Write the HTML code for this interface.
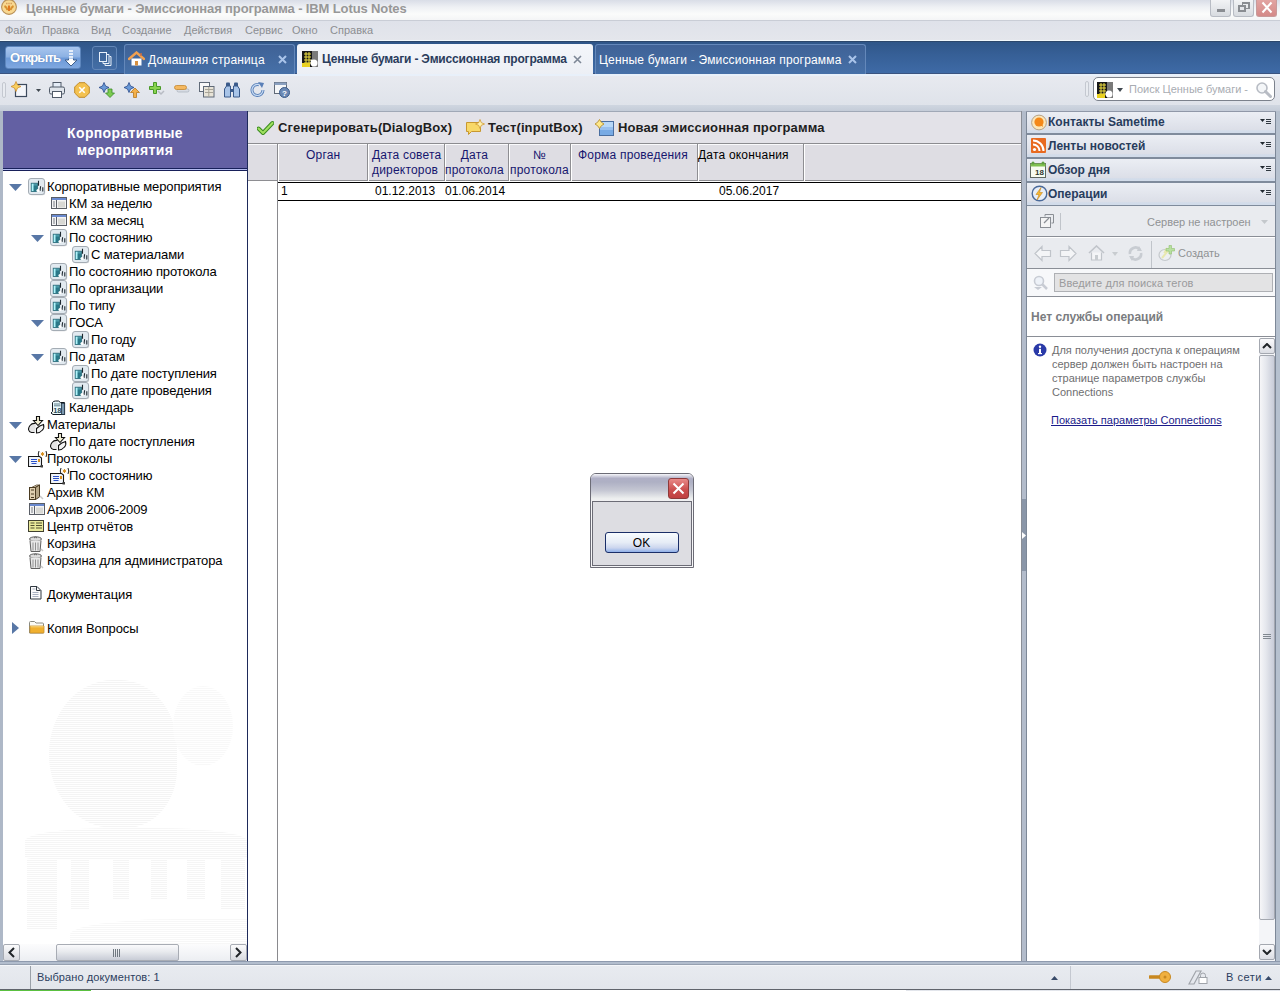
<!DOCTYPE html>
<html><head><meta charset="utf-8">
<style>
*{box-sizing:border-box;margin:0;padding:0}
html,body{width:1280px;height:991px;overflow:hidden;background:#e6e9ef;font-family:"Liberation Sans",sans-serif;font-size:12px;color:#000}
.a{position:absolute}
.nw{white-space:nowrap}
.hd{font-size:12px;line-height:15px;color:#16166e;letter-spacing:0.2px}
.dt{font-size:12px;line-height:15px;color:#000}
.tt{font-size:13px;line-height:17px;color:#000;letter-spacing:-0.12px}
svg{display:block}
/* title */
#title{left:0;top:0;width:1280px;height:20px;background:linear-gradient(#d9dde7 0%,#eef0f4 35%,#fbfcfb 70%,#f4f5f6 100%)}
#menu{left:0;top:20px;width:1280px;height:21px;background:linear-gradient(#dfe2ea,#e4e6ec);border-top:1px solid #c9cdd6;border-bottom:1px solid #f2f8fc}
#menu span{position:absolute;top:3px;font-size:11px;color:#8c8e92}
#tabs{left:0;top:41px;width:1280px;height:33px;background:linear-gradient(#2f5587 0%,#365f96 40%,#3f6ba7 100%)}
#tb{left:0;top:74px;width:1280px;height:31px;background:linear-gradient(#e8eaf0,#dfe3ea)}
#band{left:0;top:105px;width:1280px;height:6px;background:linear-gradient(#cfd6e0,#c4ccd8)}
#leftp{left:3px;top:111px;width:245px;height:850px;background:#fff;border-right:1px solid #1e2a5a}
#lhead{left:0;top:0;width:244px;height:60px;background:linear-gradient(#6360a3 0 57px,#18205a 57px 58px,#b4bcf0 58px 59px,#18205a 59px 60px);color:#fff;font-weight:bold;font-size:14px;text-align:center;line-height:17px;padding-top:14px;letter-spacing:0.35px}
#main{left:248px;top:111px;width:774px;height:850px;background:#fff;border-right:1px solid #8a8e96}
#split{left:1022px;top:111px;width:4px;height:850px;background:#b3bccb}
#side{left:1026px;top:111px;width:250px;height:850px;background:#fff}
#lborder{left:0;top:111px;width:3px;height:854px;background:#aeb8c7}
#rborder{left:1276px;top:111px;width:4px;height:850px;background:#b6c1cf}
#sbot{left:0;top:961px;width:1280px;height:4px;background:linear-gradient(#8e9aae 0 1px,#b2bdcd 1px 3px,#96a0b0 3px 4px)}
#status{left:0;top:965px;width:1280px;height:26px;background:linear-gradient(#e8ebf0,#e2e5eb)}
</style></head><body>
<div id="title" class="a">
 <svg class="a" style="left:1px;top:0" width="17" height="16" viewBox="0 0 17 16"><circle cx="8" cy="7" r="7.4" fill="#f8d890" stroke="#b89058" stroke-width="1.1"/><path d="M3.5 6q2 1 3 4M12.5 6q-2 1-3 4" stroke="#d89030" stroke-width="2" fill="none"/><path d="M8 5.5v5.5" stroke="#e07820" stroke-width="2.2"/><path d="M5 3.5h1.5M9.5 3.5h1.5M7.3 3.5h1.4" stroke="#d8a060" stroke-width="1.3"/></svg>
 <div class="a nw" style="left:26px;top:1px;font-size:13px;font-weight:bold;color:#979797;letter-spacing:-0.12px">Ценные бумаги - Эмиссионная программа - IBM Lotus Notes</div>
 <div class="a" style="left:1210px;top:0;width:21px;height:17px;border:1px solid #b8bcc4;border-top:none;border-radius:0 0 3px 3px;background:linear-gradient(#f2f3f5,#d8dbe0)"><div class="a" style="left:6px;top:9px;width:8px;height:3px;background:#8a8d92"></div></div>
 <div class="a" style="left:1233px;top:0;width:21px;height:17px;border:1px solid #b8bcc4;border-top:none;border-radius:0 0 3px 3px;background:linear-gradient(#f2f3f5,#d8dbe0)"><div class="a" style="left:8px;top:2px;width:8px;height:7px;border:2px solid #8a8d92;border-left-width:1px;border-bottom-width:1px"></div><div class="a" style="left:4px;top:5px;width:8px;height:7px;border:2px solid #8a8d92;background:#e4e6ea"></div></div>
 <div class="a" style="left:1256px;top:0;width:21px;height:17px;border:1px solid #c89a9a;border-top:none;border-radius:0 0 3px 3px;background:linear-gradient(#e2a4a2,#d48a88)"><svg class="a" style="left:4px;top:1px" width="12" height="13"><path d="M1.5 1.5 L10.5 11.5 M10.5 1.5 L1.5 11.5" stroke="#fff" stroke-width="2"/></svg></div>
</div>
<div id="menu" class="a">
 <span style="left:5px">Файл</span><span style="left:42px">Правка</span><span style="left:91px">Вид</span><span style="left:122px">Создание</span><span style="left:184px">Действия</span><span style="left:245px">Сервис</span><span style="left:292px">Окно</span><span style="left:330px">Справка</span>
</div>
<div id="tabs" class="a">
 <div class="a" style="left:0;top:0;width:1280px;height:1px;background:#2c476b"></div>
 <div class="a" style="left:0;top:32px;width:1280px;height:1px;background:#3a5480"></div>
 <div class="a" style="left:5px;top:5px;width:76px;height:23px;border-radius:3px;border:1px solid #5d86bd;background:linear-gradient(#a9c6ee 0%,#8db2e4 45%,#6d9ad8 55%,#7fa8e0 100%)">
  <div class="a nw" style="left:4px;top:3px;font-size:13px;font-weight:bold;color:#fff;letter-spacing:-0.9px;text-shadow:0 0 1px #5a7fb0">Открыть</div>
  <svg class="a" style="left:58px;top:3px" width="14" height="17" viewBox="0 0 14 17"><path d="M5 1h4M5 4h4M5 7h4" stroke="#fff" stroke-width="1.6"/><path d="M4.5 8.5 V10 H1 L7 16 L13 10 H9.5 V8.5" fill="#fff" stroke="#3d5d8a" stroke-width="1"/></svg>
 </div>
 <div class="a" style="left:92px;top:5px;width:25px;height:24px;border-radius:3px;border:1px solid #6387b8;background:rgba(255,255,255,0.04)">
  <svg class="a" style="left:5px;top:4px" width="14" height="15" viewBox="0 0 14 15"><rect x="1.5" y="1.5" width="7" height="9" fill="none" stroke="#e8f0fa" stroke-width="1"/><path d="M9 3.5h2v9h-6v-1.5" fill="none" stroke="#e8f0fa"/><path d="M11.5 5.5h1.5v9h-6v-1.5" fill="none" stroke="#e8f0fa"/></svg>
 </div>
 <div class="a" style="left:124px;top:3px;width:171px;height:30px;border:1px solid #6488ba;border-bottom:none;border-radius:3px 3px 0 0;background:linear-gradient(#3f6296,#4670a8)">
  <svg class="a" style="left:3px;top:6px" width="17" height="16" viewBox="0 0 17 16"><path d="M1 8 L8.5 1.5 L16 8" fill="none" stroke="#f0a050" stroke-width="2.4" stroke-linecap="round"/><rect x="3.5" y="7.5" width="10" height="7" fill="#fff"/><rect x="7" y="10" width="3" height="4.5" fill="#d89040"/><path d="M13 2v3" stroke="#d07040" stroke-width="1.5"/></svg>
  <div class="a nw" style="left:23px;top:8px;font-size:12px;color:#fff;letter-spacing:0.15px">Домашняя страница</div>
  <svg class="a" style="left:153px;top:10px" width="9" height="9" viewBox="0 0 9 9"><path d="M1 1L8 8M8 1L1 8" stroke="#a9c4ea" stroke-width="2"/></svg>
 </div>
 <div class="a" style="left:297px;top:3px;width:296px;height:31px;border-radius:3px 3px 0 0;background:linear-gradient(#f4f6fa,#eceff5)">
  <svg class="a" style="left:5px;top:7px" width="16" height="16" viewBox="0 0 16 16"><rect x="0" y="0" width="16" height="16" fill="#7a7a7a"/><rect x="0" y="0" width="10" height="16" fill="#181818"/><path d="M2 3h7M2 6h7M2 9h7M2 12h7M4 1v14M7 1v14" stroke="#f0e040" stroke-width="1"/><rect x="0" y="12" width="8" height="4" fill="#e8d020"/><circle cx="12" cy="12" r="3.5" fill="#fff"/><path d="M9 9l3 2" stroke="#fff" stroke-width="2"/></svg>
  <div class="a nw" style="left:25px;top:8px;font-size:12px;font-weight:bold;color:#2a3c5c;letter-spacing:-0.2px">Ценные бумаги - Эмиссионная программа</div>
  <svg class="a" style="left:276px;top:11px" width="9" height="9" viewBox="0 0 9 9"><path d="M1 1L8 8M8 1L1 8" stroke="#7d8796" stroke-width="1.6"/></svg>
 </div>
 <div class="a" style="left:595px;top:3px;width:271px;height:30px;border:1px solid #6488ba;border-bottom:none;border-radius:3px 3px 0 0;background:linear-gradient(#3f6296,#4670a8)">
  <div class="a nw" style="left:3px;top:8px;font-size:12px;color:#fff;letter-spacing:0.18px">Ценные бумаги - Эмиссионная программа</div>
  <svg class="a" style="left:252px;top:10px" width="9" height="9" viewBox="0 0 9 9"><path d="M1 1L8 8M8 1L1 8" stroke="#a9c4ea" stroke-width="2"/></svg>
 </div>
</div>
<div id="tb" class="a">
 <div class="a" style="left:0;top:0;width:1280px;height:2px;background:#e8f0fa"></div>
 <div class="a" style="left:2px;top:8px;width:4px;height:16px;border:1px solid #c4c8d0;border-radius:2px;background:#e8ebf0"></div>
 <svg class="a" style="left:11px;top:7px" width="30" height="17" viewBox="0 0 30 17"><rect x="4.5" y="3.5" width="11" height="12" fill="#f4f6fa" stroke="#3c4a5e" stroke-width="1.2"/><path d="M5 0.5 L6.5 4 L10 5.5 L6.5 7 L5 10.5 L3.5 7 L0 5.5 L3.5 4Z" fill="#f8d060" stroke="#d09030" stroke-width="0.8"/><path d="M25 8h5l-2.5 3z" fill="#404850"/></svg>
 <svg class="a" style="left:49px;top:8px" width="16" height="16" viewBox="0 0 16 16"><rect x="4" y="0.5" width="8" height="5" fill="#e4ecf6" stroke="#505a68"/><rect x="0.5" y="5" width="15" height="7" rx="1.5" fill="#dfe4ea" stroke="#505a68"/><rect x="3.5" y="9.5" width="9" height="6" fill="#fff" stroke="#505a68"/></svg>
 <svg class="a" style="left:74px;top:8px" width="16" height="16" viewBox="0 0 16 16"><path d="M5 0.7h6l4.3 4.3v6l-4.3 4.3h-6l-4.3-4.3v-6z" fill="#f4c250" stroke="#c08a28"/><path d="M5.3 5.3l5.4 5.4M10.7 5.3l-5.4 5.4" stroke="#fff" stroke-width="1.6"/></svg>
 <svg class="a" style="left:99px;top:8px" width="16" height="16" viewBox="0 0 16 16"><path d="M5 0.5 L6.5 4 L10 5.5 L6.5 7 L5 10.5 L3.5 7 L0 5.5 L3.5 4Z" fill="#6a9ad8" stroke="#2a4a8a" stroke-width="0.8"/><path d="M9 7h4v4h2.5l-4.5 4.5l-4.5-4.5h2.5z" fill="#7ccb50" stroke="#3a8a28" stroke-width="0.8"/></svg>
 <svg class="a" style="left:124px;top:8px" width="16" height="16" viewBox="0 0 16 16"><path d="M5 0.5 L6.5 4 L10 5.5 L6.5 7 L5 10.5 L3.5 7 L0 5.5 L3.5 4Z" fill="#6a9ad8" stroke="#2a4a8a" stroke-width="0.8"/><path d="M9.5 15.5v-5h-3l4.5-4.5l4.5 4.5h-3v5z" fill="#f4b048" stroke="#b87820" stroke-width="0.8"/></svg>
 <svg class="a" style="left:149px;top:8px" width="16" height="16" viewBox="0 0 16 16"><path d="M9 9l3 3l3-3" fill="none" stroke="#b8bcc4" stroke-width="1.5"/><path d="M4.5 0.5h3v4h4v3h-4v4h-3v-4h-4v-3h4z" fill="#8ad450" stroke="#4a9a28" stroke-width="1"/></svg>
 <svg class="a" style="left:174px;top:8px" width="16" height="16" viewBox="0 0 16 16"><rect x="3" y="7" width="12" height="3" rx="1.5" fill="#d8dce4" stroke="#a0a8b4" stroke-width="0.6"/><rect x="0.5" y="3.5" width="12" height="4" rx="2" fill="#f4b860" stroke="#c48830" stroke-width="0.8"/></svg>
 <svg class="a" style="left:199px;top:8px" width="16" height="16" viewBox="0 0 16 16"><rect x="0.5" y="0.5" width="10" height="9" fill="#f8f8f8" stroke="#606a78"/><rect x="4.5" y="4.5" width="10.5" height="10.5" fill="#e8e4d8" stroke="#606a78"/><path d="M6 7.5h8M6 10.5h8M9.8 5v10" stroke="#a8a498"/></svg>
 <svg class="a" style="left:224px;top:8px" width="16" height="16" viewBox="0 0 16 16"><rect x="2" y="0.5" width="4" height="5" rx="1" fill="#3a5a8a"/><rect x="10" y="0.5" width="4" height="5" rx="1" fill="#3a5a8a"/><path d="M0.5 15V7l2-3h4v11zM15.5 15V7l-2-3h-4v11z" fill="#a8c4e8" stroke="#3a5a8a"/><rect x="6" y="7" width="4" height="3" fill="#3a5a8a"/></svg>
 <svg class="a" style="left:250px;top:8px" width="16" height="16" viewBox="0 0 16 16"><path d="M13 8A5.5 5.5 0 1 1 9 2.7" fill="none" stroke="#5a80b8" stroke-width="3"/><path d="M13 8A5.5 5.5 0 1 1 9 2.7" fill="none" stroke="#c8dcf4" stroke-width="1.2"/><path d="M8 0l6 1l-2 5z" fill="#5a80b8"/></svg>
 <svg class="a" style="left:274px;top:8px" width="16" height="16" viewBox="0 0 16 16"><rect x="0.5" y="0.5" width="12" height="11" fill="#f4f6f8" stroke="#606a78"/><rect x="0.5" y="0.5" width="12" height="2.5" fill="#8aa0c0"/><circle cx="10.5" cy="10.5" r="5" fill="#6a88b4" stroke="#3a5a88"/><text x="10.5" y="13.8" font-size="8" font-weight="bold" fill="#fff" text-anchor="middle" font-family="Liberation Sans">?</text></svg>
 <!-- search -->
 <div class="a" style="left:1085px;top:7px;width:4px;height:16px;border:1px solid #c4c8d0;border-radius:2px;background:#e8ebf0"></div>
 <div class="a" style="left:1093px;top:3px;width:182px;height:24px;border:1px solid #7c828c;border-radius:5px;background:#fff">
  <svg class="a" style="left:3px;top:4px" width="16" height="16" viewBox="0 0 16 16"><rect x="0" y="0" width="16" height="16" fill="#7a7a7a"/><rect x="0" y="0" width="10" height="16" fill="#181818"/><path d="M2 3h7M2 6h7M2 9h7M2 12h7M4 1v14M7 1v14" stroke="#f0e040" stroke-width="1"/><rect x="0" y="12" width="8" height="4" fill="#e8d020"/><circle cx="12" cy="12" r="3.5" fill="#fff"/></svg>
  <svg class="a" style="left:23px;top:10px" width="6" height="4"><path d="M0 0h6l-3 4z" fill="#404850"/></svg>
  <div class="a nw" style="left:35px;top:5px;font-size:11px;color:#a8acb2">Поиск Ценные бумаги -</div>
  <svg class="a" style="left:161px;top:3px" width="17" height="17" viewBox="0 0 17 17"><circle cx="7" cy="7" r="5" fill="#f4f6f8" stroke="#b8bcc4" stroke-width="1.6"/><path d="M10.5 10.5l5 5" stroke="#b8bcc4" stroke-width="3" stroke-linecap="round"/></svg>
 </div>
</div>
<div id="band" class="a"></div>
<div id="lborder" class="a"></div>
<div id="rborder" class="a"></div>
<div id="leftp" class="a"><div id="lhead" class="a">Корпоративные<br>мероприятия</div>
<!--TREE-->
<svg class="a" style="left:6px;top:73px" width="13" height="7" viewBox="0 0 13 7"><path d="M0 0h13l-6.5 7z" fill="#5877a6"/></svg>
<svg class="a" style="left:25px;top:67px" width="18" height="18" viewBox="0 0 18 18"><rect x="1.2" y="1.2" width="16" height="16" rx="2.5" fill="#cdd0d4"/><rect x="0.5" y="0.5" width="16" height="16" rx="2.5" fill="#e2eaf0" stroke="#a4acb4"/><rect x="3.2" y="5.2" width="6.3" height="8.3" fill="#4a9aa8" stroke="#2a6a78" stroke-width="0.8"/><rect x="3.8" y="5.8" width="1.7" height="7.2" fill="#b0f4fa"/><rect x="5.8" y="7.6" width="3.4" height="5.8" fill="#2a7888"/><path d="M10.5 2.8v5M12.6 8.2l-0.6 4.8M14.8 9.2v4.3" stroke="#1e2830" stroke-width="1.1"/><circle cx="10" cy="12.5" r="1.6" fill="#fff"/></svg>
<div class="a nw tt" style="left:44px;top:67px">Корпоративные мероприятия</div>
<svg class="a" style="left:48px;top:86px" width="16" height="12" viewBox="0 0 16 12"><rect x="0.5" y="0.5" width="15" height="11" fill="#f4f4f4" stroke="#5a5e66"/><rect x="1" y="1" width="14" height="2" fill="#6a8ad0"/><path d="M5.5 3v8" stroke="#5a5e66"/><path d="M2 5h2M2 7h2M2 9h2" stroke="#7a7e86"/><rect x="7" y="4.5" width="7" height="6" fill="#d8d8d4"/></svg>
<div class="a nw tt" style="left:66px;top:84px">КМ за неделю</div>
<svg class="a" style="left:48px;top:103px" width="16" height="12" viewBox="0 0 16 12"><rect x="0.5" y="0.5" width="15" height="11" fill="#f4f4f4" stroke="#5a5e66"/><rect x="1" y="1" width="14" height="2" fill="#6a8ad0"/><path d="M5.5 3v8" stroke="#5a5e66"/><path d="M2 5h2M2 7h2M2 9h2" stroke="#7a7e86"/><rect x="7" y="4.5" width="7" height="6" fill="#d8d8d4"/></svg>
<div class="a nw tt" style="left:66px;top:101px">КМ за месяц</div>
<svg class="a" style="left:28px;top:124px" width="13" height="7" viewBox="0 0 13 7"><path d="M0 0h13l-6.5 7z" fill="#5877a6"/></svg>
<svg class="a" style="left:47px;top:118px" width="18" height="18" viewBox="0 0 18 18"><rect x="1.2" y="1.2" width="16" height="16" rx="2.5" fill="#cdd0d4"/><rect x="0.5" y="0.5" width="16" height="16" rx="2.5" fill="#e2eaf0" stroke="#a4acb4"/><rect x="3.2" y="5.2" width="6.3" height="8.3" fill="#4a9aa8" stroke="#2a6a78" stroke-width="0.8"/><rect x="3.8" y="5.8" width="1.7" height="7.2" fill="#b0f4fa"/><rect x="5.8" y="7.6" width="3.4" height="5.8" fill="#2a7888"/><path d="M10.5 2.8v5M12.6 8.2l-0.6 4.8M14.8 9.2v4.3" stroke="#1e2830" stroke-width="1.1"/><circle cx="10" cy="12.5" r="1.6" fill="#fff"/></svg>
<div class="a nw tt" style="left:66px;top:118px">По состоянию</div>
<svg class="a" style="left:69px;top:135px" width="18" height="18" viewBox="0 0 18 18"><rect x="1.2" y="1.2" width="16" height="16" rx="2.5" fill="#cdd0d4"/><rect x="0.5" y="0.5" width="16" height="16" rx="2.5" fill="#e2eaf0" stroke="#a4acb4"/><rect x="3.2" y="5.2" width="6.3" height="8.3" fill="#4a9aa8" stroke="#2a6a78" stroke-width="0.8"/><rect x="3.8" y="5.8" width="1.7" height="7.2" fill="#b0f4fa"/><rect x="5.8" y="7.6" width="3.4" height="5.8" fill="#2a7888"/><path d="M10.5 2.8v5M12.6 8.2l-0.6 4.8M14.8 9.2v4.3" stroke="#1e2830" stroke-width="1.1"/><circle cx="10" cy="12.5" r="1.6" fill="#fff"/></svg>
<div class="a nw tt" style="left:88px;top:135px">С материалами</div>
<svg class="a" style="left:47px;top:152px" width="18" height="18" viewBox="0 0 18 18"><rect x="1.2" y="1.2" width="16" height="16" rx="2.5" fill="#cdd0d4"/><rect x="0.5" y="0.5" width="16" height="16" rx="2.5" fill="#e2eaf0" stroke="#a4acb4"/><rect x="3.2" y="5.2" width="6.3" height="8.3" fill="#4a9aa8" stroke="#2a6a78" stroke-width="0.8"/><rect x="3.8" y="5.8" width="1.7" height="7.2" fill="#b0f4fa"/><rect x="5.8" y="7.6" width="3.4" height="5.8" fill="#2a7888"/><path d="M10.5 2.8v5M12.6 8.2l-0.6 4.8M14.8 9.2v4.3" stroke="#1e2830" stroke-width="1.1"/><circle cx="10" cy="12.5" r="1.6" fill="#fff"/></svg>
<div class="a nw tt" style="left:66px;top:152px">По состоянию протокола</div>
<svg class="a" style="left:47px;top:169px" width="18" height="18" viewBox="0 0 18 18"><rect x="1.2" y="1.2" width="16" height="16" rx="2.5" fill="#cdd0d4"/><rect x="0.5" y="0.5" width="16" height="16" rx="2.5" fill="#e2eaf0" stroke="#a4acb4"/><rect x="3.2" y="5.2" width="6.3" height="8.3" fill="#4a9aa8" stroke="#2a6a78" stroke-width="0.8"/><rect x="3.8" y="5.8" width="1.7" height="7.2" fill="#b0f4fa"/><rect x="5.8" y="7.6" width="3.4" height="5.8" fill="#2a7888"/><path d="M10.5 2.8v5M12.6 8.2l-0.6 4.8M14.8 9.2v4.3" stroke="#1e2830" stroke-width="1.1"/><circle cx="10" cy="12.5" r="1.6" fill="#fff"/></svg>
<div class="a nw tt" style="left:66px;top:169px">По организации</div>
<svg class="a" style="left:47px;top:186px" width="18" height="18" viewBox="0 0 18 18"><rect x="1.2" y="1.2" width="16" height="16" rx="2.5" fill="#cdd0d4"/><rect x="0.5" y="0.5" width="16" height="16" rx="2.5" fill="#e2eaf0" stroke="#a4acb4"/><rect x="3.2" y="5.2" width="6.3" height="8.3" fill="#4a9aa8" stroke="#2a6a78" stroke-width="0.8"/><rect x="3.8" y="5.8" width="1.7" height="7.2" fill="#b0f4fa"/><rect x="5.8" y="7.6" width="3.4" height="5.8" fill="#2a7888"/><path d="M10.5 2.8v5M12.6 8.2l-0.6 4.8M14.8 9.2v4.3" stroke="#1e2830" stroke-width="1.1"/><circle cx="10" cy="12.5" r="1.6" fill="#fff"/></svg>
<div class="a nw tt" style="left:66px;top:186px">По типу</div>
<svg class="a" style="left:28px;top:209px" width="13" height="7" viewBox="0 0 13 7"><path d="M0 0h13l-6.5 7z" fill="#5877a6"/></svg>
<svg class="a" style="left:47px;top:203px" width="18" height="18" viewBox="0 0 18 18"><rect x="1.2" y="1.2" width="16" height="16" rx="2.5" fill="#cdd0d4"/><rect x="0.5" y="0.5" width="16" height="16" rx="2.5" fill="#e2eaf0" stroke="#a4acb4"/><rect x="3.2" y="5.2" width="6.3" height="8.3" fill="#4a9aa8" stroke="#2a6a78" stroke-width="0.8"/><rect x="3.8" y="5.8" width="1.7" height="7.2" fill="#b0f4fa"/><rect x="5.8" y="7.6" width="3.4" height="5.8" fill="#2a7888"/><path d="M10.5 2.8v5M12.6 8.2l-0.6 4.8M14.8 9.2v4.3" stroke="#1e2830" stroke-width="1.1"/><circle cx="10" cy="12.5" r="1.6" fill="#fff"/></svg>
<div class="a nw tt" style="left:66px;top:203px">ГОСА</div>
<svg class="a" style="left:69px;top:220px" width="18" height="18" viewBox="0 0 18 18"><rect x="1.2" y="1.2" width="16" height="16" rx="2.5" fill="#cdd0d4"/><rect x="0.5" y="0.5" width="16" height="16" rx="2.5" fill="#e2eaf0" stroke="#a4acb4"/><rect x="3.2" y="5.2" width="6.3" height="8.3" fill="#4a9aa8" stroke="#2a6a78" stroke-width="0.8"/><rect x="3.8" y="5.8" width="1.7" height="7.2" fill="#b0f4fa"/><rect x="5.8" y="7.6" width="3.4" height="5.8" fill="#2a7888"/><path d="M10.5 2.8v5M12.6 8.2l-0.6 4.8M14.8 9.2v4.3" stroke="#1e2830" stroke-width="1.1"/><circle cx="10" cy="12.5" r="1.6" fill="#fff"/></svg>
<div class="a nw tt" style="left:88px;top:220px">По году</div>
<svg class="a" style="left:28px;top:243px" width="13" height="7" viewBox="0 0 13 7"><path d="M0 0h13l-6.5 7z" fill="#5877a6"/></svg>
<svg class="a" style="left:47px;top:237px" width="18" height="18" viewBox="0 0 18 18"><rect x="1.2" y="1.2" width="16" height="16" rx="2.5" fill="#cdd0d4"/><rect x="0.5" y="0.5" width="16" height="16" rx="2.5" fill="#e2eaf0" stroke="#a4acb4"/><rect x="3.2" y="5.2" width="6.3" height="8.3" fill="#4a9aa8" stroke="#2a6a78" stroke-width="0.8"/><rect x="3.8" y="5.8" width="1.7" height="7.2" fill="#b0f4fa"/><rect x="5.8" y="7.6" width="3.4" height="5.8" fill="#2a7888"/><path d="M10.5 2.8v5M12.6 8.2l-0.6 4.8M14.8 9.2v4.3" stroke="#1e2830" stroke-width="1.1"/><circle cx="10" cy="12.5" r="1.6" fill="#fff"/></svg>
<div class="a nw tt" style="left:66px;top:237px">По датам</div>
<svg class="a" style="left:69px;top:254px" width="18" height="18" viewBox="0 0 18 18"><rect x="1.2" y="1.2" width="16" height="16" rx="2.5" fill="#cdd0d4"/><rect x="0.5" y="0.5" width="16" height="16" rx="2.5" fill="#e2eaf0" stroke="#a4acb4"/><rect x="3.2" y="5.2" width="6.3" height="8.3" fill="#4a9aa8" stroke="#2a6a78" stroke-width="0.8"/><rect x="3.8" y="5.8" width="1.7" height="7.2" fill="#b0f4fa"/><rect x="5.8" y="7.6" width="3.4" height="5.8" fill="#2a7888"/><path d="M10.5 2.8v5M12.6 8.2l-0.6 4.8M14.8 9.2v4.3" stroke="#1e2830" stroke-width="1.1"/><circle cx="10" cy="12.5" r="1.6" fill="#fff"/></svg>
<div class="a nw tt" style="left:88px;top:254px">По дате поступления</div>
<svg class="a" style="left:69px;top:271px" width="18" height="18" viewBox="0 0 18 18"><rect x="1.2" y="1.2" width="16" height="16" rx="2.5" fill="#cdd0d4"/><rect x="0.5" y="0.5" width="16" height="16" rx="2.5" fill="#e2eaf0" stroke="#a4acb4"/><rect x="3.2" y="5.2" width="6.3" height="8.3" fill="#4a9aa8" stroke="#2a6a78" stroke-width="0.8"/><rect x="3.8" y="5.8" width="1.7" height="7.2" fill="#b0f4fa"/><rect x="5.8" y="7.6" width="3.4" height="5.8" fill="#2a7888"/><path d="M10.5 2.8v5M12.6 8.2l-0.6 4.8M14.8 9.2v4.3" stroke="#1e2830" stroke-width="1.1"/><circle cx="10" cy="12.5" r="1.6" fill="#fff"/></svg>
<div class="a nw tt" style="left:88px;top:271px">По дате проведения</div>
<svg class="a" style="left:47px;top:288px" width="17" height="17" viewBox="0 0 17 17"><path d="M3 15.5l-2-1.5l1.5-1.5v-9q1-1.5 3-1.5h3l2 1.5h4v12z" fill="#eafafe" stroke="#101820" stroke-width="1"/><rect x="11.5" y="4.5" width="3.2" height="11" fill="#7a98b0" stroke="#203040" stroke-width="0.8"/><path d="M4 5h6.5M4 6.8h6.5" stroke="#50707e" stroke-width="0.9"/><text x="7.3" y="13.8" font-size="7.5" font-weight="bold" fill="#2a4a5a" text-anchor="middle" font-family="Liberation Sans">18</text></svg>
<div class="a nw tt" style="left:66px;top:288px">Календарь</div>
<svg class="a" style="left:6px;top:311px" width="13" height="7" viewBox="0 0 13 7"><path d="M0 0h13l-6.5 7z" fill="#5877a6"/></svg>
<svg class="a" style="left:25px;top:305px" width="18" height="18" viewBox="0 0 18 18"><path d="M1 13.5q0-4 3-5.5q2-1 4-0.5l-1 9h-3q-3-0.5-3-3z" fill="#e4e4e4"/><path d="M7.5 7.5q-3.5-0.5-5.5 2q-1.5 2-1.5 4q0.5 2.5 3 3h3" fill="none" stroke="#101010" stroke-width="1.1"/><path d="M8.5 17v-4.5q3-3 7-4q1 3.5-1 5.5q-2.5 3-6 3z" fill="#f4f4f4" stroke="#101010" stroke-width="1.1"/><path d="M8.5 0.5h3v4h3l-4.5 5l-4.5-5h3z" fill="#f4f0d4" stroke="#101010" stroke-width="1.1"/></svg>
<div class="a nw tt" style="left:44px;top:305px">Материалы</div>
<svg class="a" style="left:47px;top:322px" width="18" height="18" viewBox="0 0 18 18"><path d="M1 13.5q0-4 3-5.5q2-1 4-0.5l-1 9h-3q-3-0.5-3-3z" fill="#e4e4e4"/><path d="M7.5 7.5q-3.5-0.5-5.5 2q-1.5 2-1.5 4q0.5 2.5 3 3h3" fill="none" stroke="#101010" stroke-width="1.1"/><path d="M8.5 17v-4.5q3-3 7-4q1 3.5-1 5.5q-2.5 3-6 3z" fill="#f4f4f4" stroke="#101010" stroke-width="1.1"/><path d="M8.5 0.5h3v4h3l-4.5 5l-4.5-5h3z" fill="#f4f0d4" stroke="#101010" stroke-width="1.1"/></svg>
<div class="a nw tt" style="left:66px;top:322px">По дате поступления</div>
<svg class="a" style="left:6px;top:345px" width="13" height="7" viewBox="0 0 13 7"><path d="M0 0h13l-6.5 7z" fill="#5877a6"/></svg>
<svg class="a" style="left:25px;top:339px" width="20" height="18" viewBox="0 0 20 18"><path d="M11 1q-1.5 3 0 6M18 1q1.5 3 0 6" fill="none" stroke="#202020" stroke-width="1"/><path d="M14.5 2v4M12.8 3l3.4 2M16.2 3l-3.4 2" stroke="#d89020" stroke-width="1"/><path d="M0.5 6.5h11l2 1.5v8.5h-13z" fill="#f0f4fa" stroke="#181818" stroke-width="1.1"/><path d="M3 9.5h6M3 11.5h6M3.5 13.5h5" stroke="#2a50c8" stroke-width="1"/><rect x="10" y="9" width="2" height="3" fill="#d89020"/><rect x="12.5" y="15" width="2.5" height="2.5" fill="#404040"/></svg>
<div class="a nw tt" style="left:44px;top:339px">Протоколы</div>
<svg class="a" style="left:47px;top:356px" width="20" height="18" viewBox="0 0 20 18"><path d="M11 1q-1.5 3 0 6M18 1q1.5 3 0 6" fill="none" stroke="#202020" stroke-width="1"/><path d="M14.5 2v4M12.8 3l3.4 2M16.2 3l-3.4 2" stroke="#d89020" stroke-width="1"/><path d="M0.5 6.5h11l2 1.5v8.5h-13z" fill="#f0f4fa" stroke="#181818" stroke-width="1.1"/><path d="M3 9.5h6M3 11.5h6M3.5 13.5h5" stroke="#2a50c8" stroke-width="1"/><rect x="10" y="9" width="2" height="3" fill="#d89020"/><rect x="12.5" y="15" width="2.5" height="2.5" fill="#404040"/></svg>
<div class="a nw tt" style="left:66px;top:356px">По состоянию</div>
<svg class="a" style="left:25px;top:373px" width="16" height="17" viewBox="0 0 16 17"><path d="M3.5 3.5l5-2.5h3l-5 2.5z" fill="#e8dcc0" stroke="#5a4a30" stroke-width="0.8"/><rect x="1.5" y="3.5" width="6" height="12" fill="#e0d0b0" stroke="#4a3a20" stroke-width="1"/><path d="M7.5 3.5l4-2.5v12l-4 2.5z" fill="#b8a888" stroke="#4a3a20" stroke-width="1"/><path d="M3 6h3M3 10h3M3 13.5h3" stroke="#4a3a20" stroke-width="1"/><path d="M12 12l3 3" stroke="#c8c8c8" stroke-width="1.5"/></svg>
<div class="a nw tt" style="left:44px;top:373px">Архив КМ</div>
<svg class="a" style="left:26px;top:392px" width="16" height="12" viewBox="0 0 16 12"><rect x="0.5" y="0.5" width="15" height="11" fill="#f4f4f4" stroke="#5a5e66"/><rect x="1" y="1" width="14" height="2" fill="#6a8ad0"/><path d="M5.5 3v8" stroke="#5a5e66"/><path d="M2 5h2M2 7h2M2 9h2" stroke="#7a7e86"/><rect x="7" y="4.5" width="7" height="6" fill="#d8d8d4"/></svg>
<div class="a nw tt" style="left:44px;top:390px">Архив 2006-2009</div>
<svg class="a" style="left:25px;top:409px" width="16" height="13" viewBox="0 0 16 13"><rect x="0.5" y="0.5" width="15" height="11" fill="#e8e89a" stroke="#404030"/><path d="M2.5 3h4M2.5 5.5h4M2.5 8h4M8 3h6M8 5.5h6M8 8h6" stroke="#505030" stroke-width="1"/></svg>
<div class="a nw tt" style="left:44px;top:407px">Центр отчётов</div>
<svg class="a" style="left:25px;top:425px" width="16" height="17" viewBox="0 0 16 17"><ellipse cx="7.5" cy="3" rx="6" ry="2.2" fill="#dcdcdc" stroke="#606060" stroke-width="1"/><path d="M2 4.5l1 11h9l1-11" fill="#e8e8e8" stroke="#606060" stroke-width="1"/><path d="M5 6.5v8M7.5 6.5v8M10 6.5v8" stroke="#909090" stroke-width="1"/><path d="M6 2q1.5-2 3 0" stroke="#606060" fill="none"/><path d="M13 13l2 2" stroke="#c8c8c8" stroke-width="1.5"/></svg>
<div class="a nw tt" style="left:44px;top:424px">Корзина</div>
<svg class="a" style="left:25px;top:442px" width="16" height="17" viewBox="0 0 16 17"><ellipse cx="7.5" cy="3" rx="6" ry="2.2" fill="#dcdcdc" stroke="#606060" stroke-width="1"/><path d="M2 4.5l1 11h9l1-11" fill="#e8e8e8" stroke="#606060" stroke-width="1"/><path d="M5 6.5v8M7.5 6.5v8M10 6.5v8" stroke="#909090" stroke-width="1"/><path d="M6 2q1.5-2 3 0" stroke="#606060" fill="none"/><path d="M13 13l2 2" stroke="#c8c8c8" stroke-width="1.5"/></svg>
<div class="a nw tt" style="left:44px;top:441px">Корзина для администратора</div>
<svg class="a" style="left:27px;top:475px" width="12" height="14" viewBox="0 0 12 14"><path d="M0.5 0.5h6.5l4 4v8.5h-10.5z" fill="#fafafa" stroke="#303840" stroke-width="1"/><path d="M6.5 0.5v4h4" fill="none" stroke="#303840"/><path d="M2.5 3h3M2.5 6.5h6M2.5 8.5h6M2.5 10.5h6" stroke="#a8b0c0"/></svg>
<div class="a nw tt" style="left:44px;top:475px">Документация</div>
<svg class="a" style="left:9px;top:511px" width="7" height="12" viewBox="0 0 7 12"><path d="M0 0v12l7-6z" fill="#5877a6"/></svg>
<svg class="a" style="left:26px;top:510px" width="16" height="13" viewBox="0 0 16 13"><path d="M0.5 12V1.5q0-1 1-1h4l1.5 1.5h6.5q1 0 1 1V12z" fill="#fbfbf6" stroke="#8a8a80" stroke-width="1"/><path d="M1 5h14v6.5q0 0.5-0.5 0.5h-13q-0.5 0-0.5-0.5z" fill="#f0b030" stroke="#c8902a" stroke-width="0.8"/><path d="M1.5 5.8h13" stroke="#f8d880"/></svg>
<div class="a nw tt" style="left:44px;top:509px">Копия Вопросы</div>
<!--/TREE-->
 <div class="a" style="left:0;top:567px;width:244px;height:262px;opacity:0.4">
  <div class="a" style="left:46px;top:2px;width:128px;height:148px;border-radius:50% 45% 40% 50%;background:repeating-linear-gradient(#e4e4e4 0 1px,transparent 1px 2px)"></div>
  <div class="a" style="left:170px;top:8px;width:60px;height:80px;border-radius:50%;background:repeating-linear-gradient(#f0f0f0 0 1px,transparent 1px 2px)"></div>
  <div class="a" style="left:22px;top:150px;width:222px;height:32px;border-radius:40% 40% 10% 10%;background:repeating-linear-gradient(#e8e8e8 0 1px,transparent 1px 2px)"></div>
  <div class="a" style="left:24px;top:182px;width:30px;height:70px;background:repeating-linear-gradient(#e8e8e8 0 1px,transparent 1px 2px)"></div>
  <div class="a" style="left:68px;top:182px;width:18px;height:50px;background:repeating-linear-gradient(#e8e8e8 0 1px,transparent 1px 2px)"></div>
  <div class="a" style="left:110px;top:182px;width:16px;height:40px;background:repeating-linear-gradient(#e8e8e8 0 1px,transparent 1px 2px)"></div>
  <div class="a" style="left:148px;top:182px;width:16px;height:40px;background:repeating-linear-gradient(#e8e8e8 0 1px,transparent 1px 2px)"></div>
  <div class="a" style="left:184px;top:182px;width:18px;height:40px;background:repeating-linear-gradient(#e8e8e8 0 1px,transparent 1px 2px)"></div>
  <div class="a" style="left:218px;top:182px;width:24px;height:50px;background:repeating-linear-gradient(#e8e8e8 0 1px,transparent 1px 2px)"></div>
 </div>
 <div class="a" style="left:67px;top:808px;width:177px;height:26px;border-radius:60% 0 0 0;opacity:0.3;background:repeating-linear-gradient(#e4e4e4 0 1px,transparent 1px 2px)"></div>
 <div class="a" style="left:0;top:833px;width:244px;height:17px;background:linear-gradient(#fcfcfd,#eceef2)"></div>
 <div class="a" style="left:0;top:833px;width:17px;height:17px;border:1px solid #a8acb4;border-radius:2px;background:linear-gradient(#fbfbfc,#d8dae0)"><svg class="a" style="left:4px;top:2px" width="7" height="11" viewBox="0 0 7 11"><path d="M6 1L1.5 5.5L6 10" fill="none" stroke="#202428" stroke-width="2"/></svg></div>
 <div class="a" style="left:53px;top:833px;width:123px;height:17px;border:1px solid #a8acb4;border-radius:2px;background:linear-gradient(#fafafc,#e8eaee 45%,#c8ccd6)"><div class="a" style="left:56px;top:4px;width:7px;height:8px;background:repeating-linear-gradient(90deg,#707880 0 1px,transparent 1px 2px)"></div></div>
 <div class="a" style="left:227px;top:833px;width:17px;height:17px;border:1px solid #a8acb4;border-radius:2px;background:linear-gradient(#fbfbfc,#d8dae0)"><svg class="a" style="left:4px;top:2px" width="7" height="11" viewBox="0 0 7 11"><path d="M1 1L5.5 5.5L1 10" fill="none" stroke="#202428" stroke-width="2"/></svg></div>
</div>
<div id="main" class="a">
 <div class="a" style="left:0;top:0;width:773px;height:1px;background:#a0a8b6"></div>
 <div class="a" style="left:0;top:1px;width:773px;height:31px;background:#e3e2e8"></div>
 <svg class="a" style="left:9px;top:9px" width="17" height="15" viewBox="0 0 17 15"><path d="M1.5 8.5l4.5 4.5l9.5-10" fill="none" stroke="#3a8a20" stroke-width="4" stroke-linecap="round" stroke-linejoin="round"/><path d="M1.5 8.5l4.5 4.5l9.5-10" fill="none" stroke="#a0e060" stroke-width="2" stroke-linecap="round" stroke-linejoin="round"/></svg>
 <div class="a nw" style="left:30px;top:9px;font-size:13px;font-weight:bold;color:#1e1e1e;letter-spacing:0.12px">Сгенерировать(DialogBox)</div>
 <svg class="a" style="left:217px;top:8px" width="20" height="17" viewBox="0 0 20 17"><path d="M1.5 3.5h14v9h-9l-3 3v-3h-2z" fill="#f8d868" stroke="#c89830" stroke-width="1"/><path d="M15 0.5 L16.3 3.7 L19.5 5 L16.3 6.3 L15 9.5 L13.7 6.3 L10.5 5 L13.7 3.7Z" fill="#fff4b0" stroke="#d09830" stroke-width="0.8"/></svg>
 <div class="a nw" style="left:240px;top:9px;font-size:13px;font-weight:bold;color:#1e1e1e;letter-spacing:0.12px">Тест(inputBox)</div>
 <svg class="a" style="left:347px;top:8px" width="19" height="18" viewBox="0 0 19 18"><rect x="4.5" y="2.5" width="14" height="14" fill="#78aae4" stroke="#4a6ea0"/><rect x="5" y="3" width="13" height="5" fill="#b8d8f8"/><rect x="5" y="8" width="13" height="3" fill="#98c0ee"/><path d="M4.5 0.5 L6.3 3.2 L9 5 L6.3 6.8 L4.5 9.5 L2.7 6.8 L0 5 L2.7 3.2Z" fill="#ffe888" stroke="#b89030" stroke-width="0.9"/></svg>
 <div class="a nw" style="left:370px;top:9px;font-size:13px;font-weight:bold;color:#1e1e1e;letter-spacing:0.12px">Новая эмиссионная программа</div>
 <div class="a" style="left:0;top:32px;width:773px;height:1px;background:#8c8c90"></div>
 <div class="a" style="left:0;top:33px;width:773px;height:1px;background:#fafafc"></div>
 <div class="a" style="left:0;top:34px;width:773px;height:35px;background:#dedde3"></div>
 <div class="a" style="left:0;top:69px;width:773px;height:1px;background:#8e8e92"></div>
 <div class="a" style="left:29px;top:33px;width:1px;height:817px;background:#8a8a8e"></div>
 <div class="a" style="left:30px;top:33px;width:1px;height:37px;background:#fff"></div>
 <div class="a" style="left:119px;top:33px;width:1px;height:37px;background:#8e8e92"></div><div class="a" style="left:120px;top:33px;width:1px;height:37px;background:#fff"></div><div class="a" style="left:196px;top:33px;width:1px;height:37px;background:#8e8e92"></div><div class="a" style="left:197px;top:33px;width:1px;height:37px;background:#fff"></div><div class="a" style="left:260px;top:33px;width:1px;height:37px;background:#8e8e92"></div><div class="a" style="left:261px;top:33px;width:1px;height:37px;background:#fff"></div><div class="a" style="left:322px;top:33px;width:1px;height:37px;background:#8e8e92"></div><div class="a" style="left:323px;top:33px;width:1px;height:37px;background:#fff"></div><div class="a" style="left:449px;top:33px;width:1px;height:37px;background:#8e8e92"></div><div class="a" style="left:450px;top:33px;width:1px;height:37px;background:#fff"></div><div class="a" style="left:555px;top:33px;width:1px;height:37px;background:#8e8e92"></div><div class="a" style="left:556px;top:33px;width:1px;height:37px;background:#fff"></div>
 <div class="a nw hd" style="left:58px;top:37px">Орган</div>
 <div class="a nw hd" style="left:124px;top:37px">Дата совета<br>директоров</div>
 <div class="a nw hd" style="left:197px;top:37px;text-align:center">Дата<br>протокола</div>
 <div class="a nw hd" style="left:262px;top:37px;text-align:center">№<br>протокола</div>
 <div class="a nw hd" style="left:330px;top:37px">Форма проведения</div>
 <div class="a nw hd" style="left:450px;top:37px;color:#000">Дата окончания</div>
 <div class="a" style="left:30px;top:71px;width:743px;height:1px;background:#000"></div>
 <div class="a" style="left:30px;top:89px;width:743px;height:1px;background:#000"></div>
 <div class="a nw dt" style="left:33px;top:73px">1</div>
 <div class="a nw dt" style="left:127px;top:73px">01.12.2013</div>
 <div class="a nw dt" style="left:197px;top:73px">01.06.2014</div>
 <div class="a nw dt" style="left:471px;top:73px">05.06.2017</div>
</div>
<div id="split" class="a"><div class="a" style="left:0;top:388px;width:4px;height:72px;background:#8a96a8"></div><svg class="a" style="left:0;top:421px" width="4" height="7"><path d="M0 0l4 3.5l-4 3.5z" fill="#fff"/></svg></div>
<div id="side" class="a">
 <div class="a" style="left:0;top:0;width:1px;height:850px;background:#7d8898"></div>
 <div class="a" style="left:249px;top:0;width:1px;height:850px;background:#7d8898"></div>
 <div class="a" style="left:0;top:0;width:250px;height:1px;background:#9098a8"></div>
<div class="a" style="left:1px;top:1px;width:248px;height:23px;background:linear-gradient(#ebeef4,#dcdfe8 85%,#d2dcea 90%,#d2dcea 91%);border-bottom:2px solid #7f8b9c"><svg class="a" style="left:4px;top:2px" width="17" height="17" viewBox="0 0 17 17"><circle cx="8" cy="8.5" r="7.4" fill="#fce6b8" stroke="#b4a084" stroke-width="1"/><circle cx="8" cy="8" r="4.6" fill="#f48818"/><path d="M10 11.5l2 1.5l-0.5-2.5z" fill="#f48818"/></svg><div class="a nw" style="left:21px;top:3px;font-size:12px;font-weight:bold;color:#283c5c">Контакты Sametime</div><svg class="a" style="left:233px;top:7px" width="12" height="6" viewBox="0 0 12 6"><path d="M0 0h5l-2.5 3z" fill="#202830"/><path d="M6 0.5h5M6 2.5h5M6 4.5h5" stroke="#303840" stroke-width="1"/></svg></div><div class="a" style="left:1px;top:24px;width:248px;height:24px;background:linear-gradient(#ebeef4,#dcdfe8 85%,#d2dcea 90%,#d2dcea 91%);border-bottom:2px solid #7f8b9c"><svg class="a" style="left:4px;top:3px" width="15" height="15" viewBox="0 0 15 15"><rect x="0" y="0" width="15" height="15" rx="1" fill="#e86a20"/><circle cx="3.5" cy="11.5" r="1.6" fill="#fff"/><path d="M2 6.5a6.5 6.5 0 0 1 6.5 6.5M2 2.5a10.5 10.5 0 0 1 10.5 10.5" fill="none" stroke="#fff" stroke-width="2"/></svg><div class="a nw" style="left:21px;top:4px;font-size:12px;font-weight:bold;color:#283c5c">Ленты новостей</div><svg class="a" style="left:233px;top:7px" width="12" height="6" viewBox="0 0 12 6"><path d="M0 0h5l-2.5 3z" fill="#202830"/><path d="M6 0.5h5M6 2.5h5M6 4.5h5" stroke="#303840" stroke-width="1"/></svg></div><div class="a" style="left:1px;top:48px;width:248px;height:24px;background:linear-gradient(#ebeef4,#dcdfe8 85%,#d2dcea 90%,#d2dcea 91%);border-bottom:2px solid #7f8b9c"><svg class="a" style="left:3px;top:2px" width="16" height="17" viewBox="0 0 16 17"><rect x="0.5" y="2.5" width="15" height="14" fill="#f8fcf0" stroke="#606860"/><rect x="0.5" y="2.5" width="15" height="3" fill="#80c050"/><circle cx="3" cy="2" r="1.5" fill="#60a040"/><circle cx="13" cy="2" r="1.5" fill="#60a040"/><text x="9.5" y="14" font-size="8" font-weight="bold" fill="#303830" text-anchor="middle" font-family="Liberation Sans">18</text></svg><div class="a nw" style="left:21px;top:4px;font-size:12px;font-weight:bold;color:#283c5c">Обзор дня</div><svg class="a" style="left:233px;top:7px" width="12" height="6" viewBox="0 0 12 6"><path d="M0 0h5l-2.5 3z" fill="#202830"/><path d="M6 0.5h5M6 2.5h5M6 4.5h5" stroke="#303840" stroke-width="1"/></svg></div><div class="a" style="left:1px;top:72px;width:248px;height:23px;background:linear-gradient(#ebeef4,#dcdfe8 85%,#d2dcea 90%,#d2dcea 91%);border-bottom:1px solid #7f8b9c"><svg class="a" style="left:4px;top:2px" width="17" height="17" viewBox="0 0 17 17"><circle cx="8.5" cy="8.5" r="7.3" fill="#e8eef8" stroke="#4a6a9a" stroke-width="1.4"/><path d="M10 2.5l-5 7h3l-2 5.5l5.5-7.5h-3z" fill="#f8b830" stroke="#c88820" stroke-width="0.6"/></svg><div class="a nw" style="left:21px;top:4px;font-size:12px;font-weight:bold;color:#283c5c">Операции</div><svg class="a" style="left:233px;top:7px" width="12" height="6" viewBox="0 0 12 6"><path d="M0 0h5l-2.5 3z" fill="#202830"/><path d="M6 0.5h5M6 2.5h5M6 4.5h5" stroke="#303840" stroke-width="1"/></svg></div>
 <div class="a" style="left:1px;top:95px;width:248px;height:31px;background:#e9ebef;border-bottom:1px solid #8a8e96">
  <svg class="a" style="left:13px;top:8px" width="14" height="14" viewBox="0 0 14 14"><rect x="0.5" y="3.5" width="10" height="10" fill="#f4f4f4" stroke="#8a8e94"/><path d="M5 2.5v-2h8.5v8.5h-2" fill="none" stroke="#8a8e94"/><path d="M4 9l5-5" stroke="#8a8e94" stroke-width="1.2"/></svg>
  <div class="a" style="left:33px;top:7px;width:1px;height:17px;background:#c0c4ca"></div>
  <div class="a nw" style="left:120px;top:10px;font-size:11px;color:#909294">Сервер не настроен</div>
  <svg class="a" style="left:234px;top:14px" width="7" height="4"><path d="M0 0h7l-3.5 4z" fill="#c4c8cc"/></svg>
 </div>
 <div class="a" style="left:1px;top:127px;width:248px;height:31px;background:#e9ebef;border-bottom:1px solid #8a8e96">
  <svg class="a" style="left:7px;top:7px" width="18" height="17" viewBox="0 0 18 17"><path d="M8 1.5v4h8.5v6h-8.5v4l-7-7z" fill="#f4f5f7" stroke="#c0c4ca" stroke-width="1.2"/></svg>
  <svg class="a" style="left:32px;top:7px" width="18" height="17" viewBox="0 0 18 17"><path d="M10 1.5v4h-8.5v6h8.5v4l7-7z" fill="#f4f5f7" stroke="#c0c4ca" stroke-width="1.2"/></svg>
  <svg class="a" style="left:61px;top:7px" width="17" height="16" viewBox="0 0 17 16"><path d="M1 8l7.5-7l7.5 7" fill="none" stroke="#c0c4ca" stroke-width="1.6"/><path d="M3.5 7.5v7.5h10v-7.5" fill="#f4f5f7" stroke="#c0c4ca" stroke-width="1.2"/><rect x="7" y="10" width="3" height="5" fill="#c8ccd0"/></svg>
  <svg class="a" style="left:85px;top:14px" width="6" height="4"><path d="M0 0h6l-3 4z" fill="#c8ccd0"/></svg>
  <svg class="a" style="left:100px;top:7px" width="17" height="17" viewBox="0 0 17 17"><path d="M3 9a5.5 5.5 0 0 1 10-4" fill="none" stroke="#c8ccd2" stroke-width="2.6"/><path d="M14 8a5.5 5.5 0 0 1-10 4" fill="none" stroke="#c8ccd2" stroke-width="2.6"/><path d="M12 1l3 5h-5z" fill="#c8ccd2"/><path d="M5 16l-3-5h5z" fill="#c8ccd2"/></svg>
  <div class="a" style="left:124px;top:3px;width:1px;height:27px;background:#c0c4ca"></div>
  <svg class="a" style="left:131px;top:7px" width="17" height="17" viewBox="0 0 17 17"><ellipse cx="7" cy="10" rx="6" ry="5.5" fill="#eef0f2" stroke="#c4c8cc" stroke-width="1.2"/><path d="M4 13l5-6h-2l2-4" stroke="#e8e8b0" stroke-width="2" fill="none"/><path d="M11 0.5h2.5v3h3v2.5h-3v3h-2.5v-3h-3v-2.5h3z" fill="#b8e0a0" stroke="#90c070" stroke-width="0.6"/></svg>
  <div class="a nw" style="left:151px;top:9px;font-size:11px;color:#909294">Создать</div>
 </div>
 <div class="a" style="left:1px;top:158px;width:248px;height:28px;background:#f7f8fa;border-bottom:1px solid #8a8e96">
  <svg class="a" style="left:5px;top:6px" width="18" height="17" viewBox="0 0 18 17"><circle cx="7" cy="6" r="4.5" fill="#eef2f8" stroke="#c8ccd4" stroke-width="1.6"/><path d="M10 9l5 5" stroke="#c8ccd4" stroke-width="2.5"/><path d="M2 12h8l-4 3z" fill="#c8ccd4"/></svg>
  <div class="a" style="left:27px;top:4px;width:219px;height:19px;background:#e3e3e4;border:1px solid #aeb0b4"><div class="a nw" style="left:4px;top:3px;font-size:11px;color:#9a9a9c;letter-spacing:0.1px">Введите для поиска тегов</div></div>
 </div>
 <div class="a nw" style="left:5px;top:199px;font-size:12px;font-weight:bold;color:#7a7c80">Нет службы операций</div>
 <div class="a" style="left:1px;top:225px;width:248px;height:1px;background:#8a8e96"></div>
 <svg class="a" style="left:7px;top:232px" width="14" height="14" viewBox="0 0 14 14"><circle cx="7" cy="7" r="6.5" fill="#2a3aa8"/><circle cx="7" cy="3.8" r="1.2" fill="#fff"/><rect x="6" y="5.8" width="2" height="5" fill="#fff"/><rect x="5" y="10" width="4" height="1.2" fill="#fff"/></svg>
 <div class="a" style="left:26px;top:232px;font-size:11px;line-height:14px;color:#6e6e70;white-space:nowrap">Для получения доступа к операциям<br>сервер должен быть настроен на<br>странице параметров службы<br>Connections</div>
 <div class="a nw" style="left:25px;top:303px;font-size:11px;color:#1a1a8a;text-decoration:underline">Показать параметры Connections</div>
 <!-- scrollbar -->
 <div class="a" style="left:233px;top:227px;width:16px;height:623px;background:#f4f5f8"></div>
 <div class="a" style="left:233px;top:227px;width:16px;height:16px;border:1px solid #a4a8b0;border-radius:2px;background:linear-gradient(#fafafc,#dcdee4)"><svg class="a" style="left:2px;top:4px" width="10" height="6" viewBox="0 0 10 6"><path d="M1 5l4-4l4 4" fill="none" stroke="#202428" stroke-width="2"/></svg></div>
 <div class="a" style="left:233px;top:244px;width:16px;height:565px;border:1px solid #a4a8b0;border-radius:2px;background:linear-gradient(90deg,#f6f6f8,#e6e8ee 40%,#c8ccd8)"><div class="a" style="left:3px;top:278px;width:8px;height:6px;background:repeating-linear-gradient(#808890 0 1px,transparent 1px 2px)"></div></div>
 <div class="a" style="left:233px;top:833px;width:16px;height:16px;border:1px solid #a4a8b0;border-radius:2px;background:linear-gradient(#fafafc,#dcdee4)"><svg class="a" style="left:2px;top:4px" width="10" height="6" viewBox="0 0 10 6"><path d="M1 1l4 4l4-4" fill="none" stroke="#202428" stroke-width="2"/></svg></div>
</div>
<div id="sbot" class="a"></div>
<div id="status" class="a">
 <div class="a" style="left:0;top:0;width:1280px;height:1px;background:#f4f6f9"></div>
 <div class="a" style="left:30px;top:1px;width:1px;height:23px;background:#9aa0a8"></div>
 <div class="a nw" style="left:37px;top:6px;font-size:11px;color:#2c3e5e;letter-spacing:0.1px">Выбрано документов: 1</div>
 <svg class="a" style="left:1051px;top:11px" width="7" height="4"><path d="M0 4h7l-3.5-4z" fill="#384a68"/></svg>
 <div class="a" style="left:1070px;top:1px;width:1px;height:23px;background:#c4c8d0"></div>
 <svg class="a" style="left:1149px;top:5px" width="22" height="14" viewBox="0 0 22 14"><path d="M1 7h10" stroke="#c88820" stroke-width="3.5" stroke-linecap="round"/><circle cx="16" cy="7" r="5.5" fill="#f0b040" stroke="#c88820"/><circle cx="16" cy="7" r="1.5" fill="#c88820"/></svg>
 <svg class="a" style="left:1188px;top:4px" width="20" height="16" viewBox="0 0 20 16"><path d="M1 15l7-13h5l-7 13z" fill="none" stroke="#a0a4aa" stroke-width="1.2"/><rect x="11" y="8.5" width="8" height="6" fill="#fff" stroke="#a0a4aa"/><path d="M12.5 8.5v-2a2.5 2.5 0 0 1 5 0v2" fill="none" stroke="#a0a4aa"/></svg>
 <div class="a nw" style="left:1226px;top:6px;font-size:11px;color:#2c3e5e;letter-spacing:0.5px">В сети</div>
 <svg class="a" style="left:1265px;top:11px" width="7" height="4"><path d="M0 4h7l-3.5-4z" fill="#384a68"/></svg>
 <div class="a" style="left:0;top:24px;width:1280px;height:1px;background:#60646c"></div>
 <div class="a" style="left:0;top:25px;width:91px;height:1px;background:#5ac040"></div>
 <div class="a" style="left:91px;top:25px;width:815px;height:1px;background:#fff"></div>
</div>
<div class="a" style="left:590px;top:473px;width:104px;height:95px;border:1px solid #6c6c76;border-radius:6px 6px 0 0;background:#f6f6f8">
 <div class="a" style="left:0;top:0;width:102px;height:27px;border-radius:5px 5px 0 0;background:linear-gradient(#f6f6fa 0%,#b0b0c6 16%,#aeb0c4 30%,#c4c6d2 60%,#eceeee 90%,#f0f0f2 100%)"></div>
 <div class="a" style="left:1px;top:27px;width:100px;height:65px;border:1px solid #6c6c76;background:#dddde2"></div>
 <div class="a" style="left:77px;top:4px;width:21px;height:21px;border:1px solid #8e3a3a;border-radius:3px;background:linear-gradient(#e88a88,#cc5050 55%,#c04040)">
  <svg class="a" style="left:3px;top:3px" width="13" height="13" viewBox="0 0 13 13"><path d="M1.5 1.5L11.5 11.5M11.5 1.5L1.5 11.5" stroke="#fff" stroke-width="2"/></svg>
 </div>
 <div class="a" style="left:14px;top:58px;width:74px;height:21px;border:1px solid #1a2e68;border-radius:3px;background:linear-gradient(#f8fcff 0%,#e6ecf6 50%,#ccd6ee 78%,#90b0e8 100%);text-align:center;font-size:12px;line-height:20px;color:#000;text-indent:-1px">OK</div>
</div>
</body></html>
